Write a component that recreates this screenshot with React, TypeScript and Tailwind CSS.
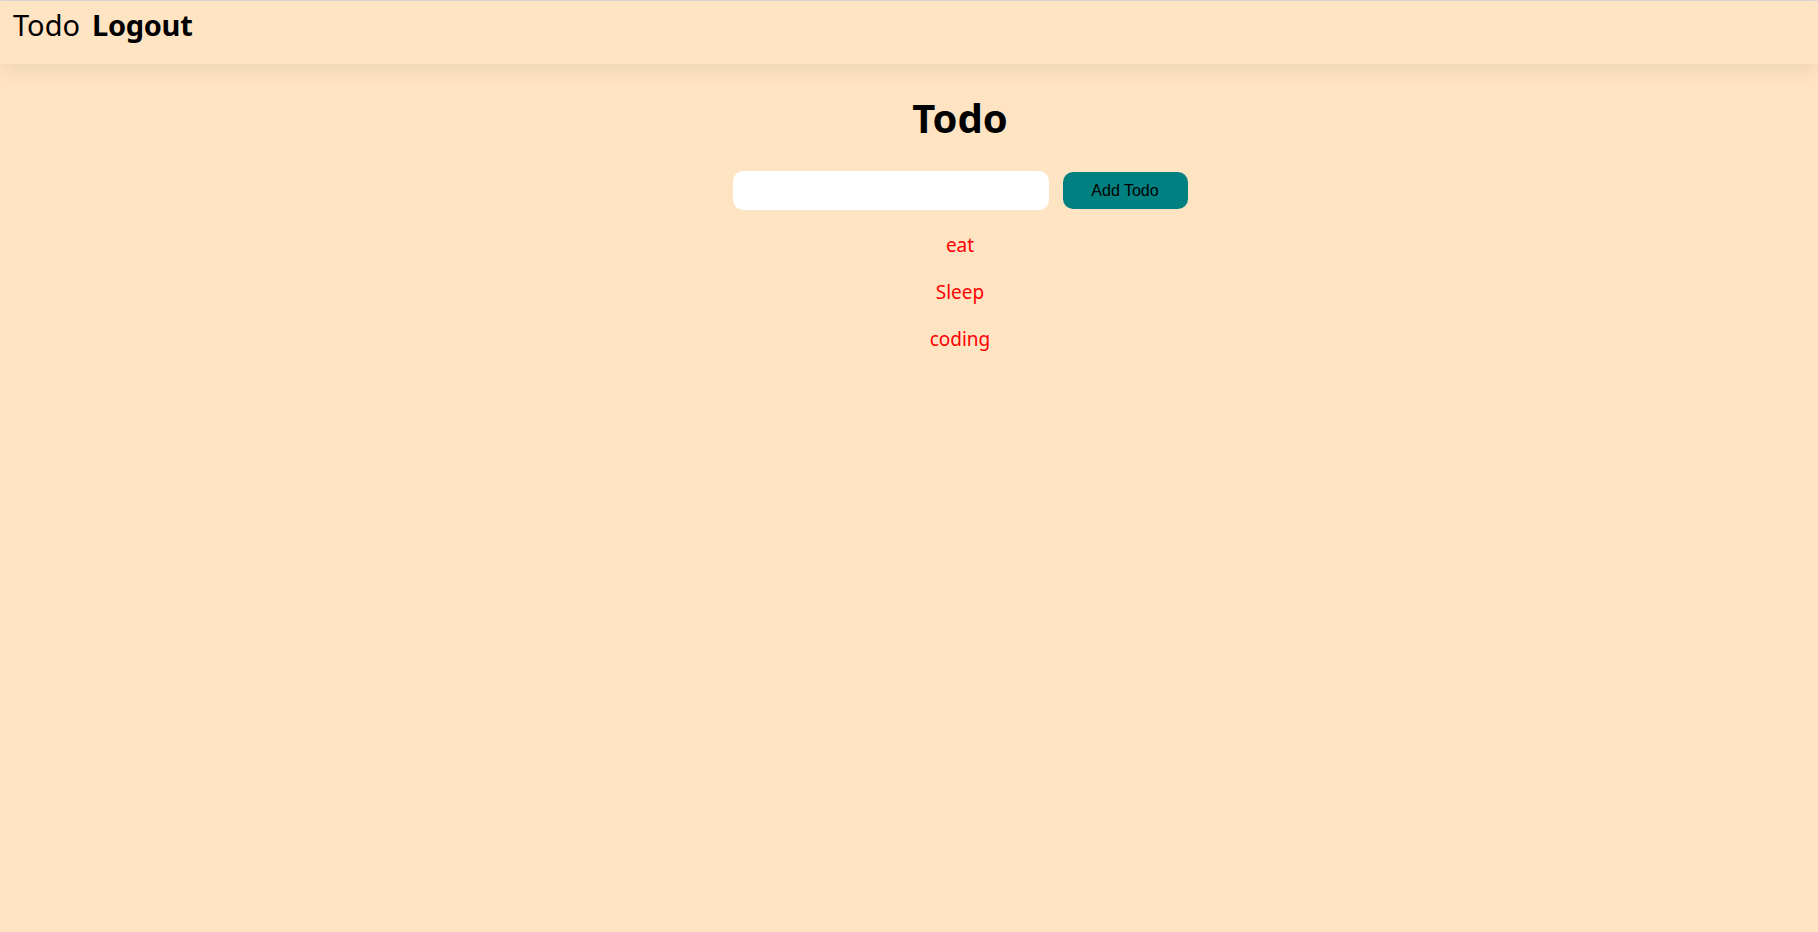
export default function App() {
  return (
    <div className="min-h-screen w-full bg-[#ffe4c4] border-t border-[#dcdcdc]" style={{ fontFamily: '"Noto Sans", sans-serif' }}>
      <nav className="h-[63px] bg-[#ffe4c4] shadow-[0_4px_22px_rgba(0,0,0,0.09)] flex items-start px-[13px] gap-[12px] pt-[3px] relative">
        <span className="text-[29px] leading-[42px] text-black font-normal">Todo</span>
        <span className="text-[29px] leading-[42px] text-black font-bold tracking-[-0.3px]">Logout</span>
      </nav>
      <main className="flex flex-col items-center pl-[102px]">
        <h1 className="mt-[29px] text-[40px] leading-[50px] font-bold text-black">Todo</h1>
        <div className="mt-[28px] flex items-center gap-[14px]">
          <input className="w-[316px] h-[39px] bg-white rounded-[10px] outline-none px-3" />
          <button className="w-[125px] h-[37px] bg-[#008080] rounded-[10px] text-[16px] text-black" style={{ fontFamily: '"Liberation Sans", Arial, sans-serif' }}>Add Todo</button>
        </div>
        <ul className="mt-[21px] flex flex-col items-center gap-[19px]">
          <li className="text-[19px] leading-[28px] text-[#ff0000]">eat</li>
          <li className="text-[19px] leading-[28px] text-[#ff0000]">Sleep</li>
          <li className="text-[19px] leading-[28px] text-[#ff0000]">coding</li>
        </ul>
      </main>
    </div>
  );
}
